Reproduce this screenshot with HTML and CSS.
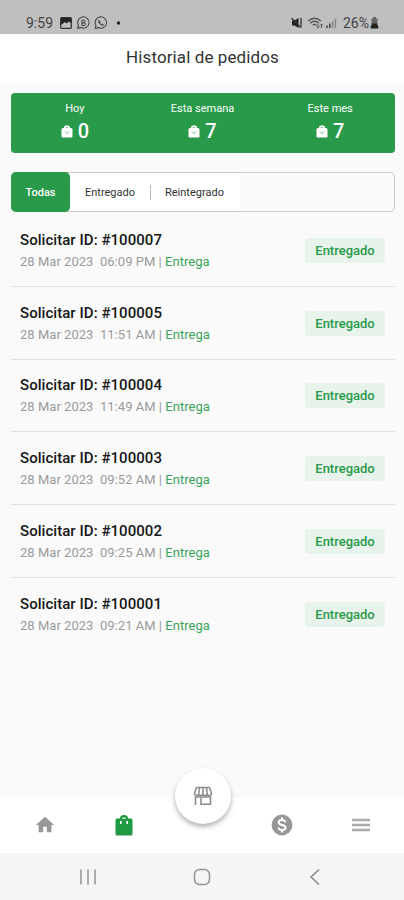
FILE: index.html
```html
<!DOCTYPE html>
<html lang="es">
<head>
    <meta charset="UTF-8">
    <meta name="viewport" content="width=device-width, initial-scale=1.0">
    <title>Historial de pedidos</title>
    <link rel="stylesheet" href="styles.css">
</head>
<body>
    <svg class="sprite">
        <symbol id="bag" viewBox="0 0 12 13">
            <path d="M3 3V2.500A2 2 0 0 1 5 .5h2a2 2 0 0 1 2 2V3h1a1.500 1.500 0 0 1 1.500 1.500V11.500a1 1 0 0 1-1 1h-9a1 1 0 0 1-1-1V4.500A1.500 1.500 0 0 1 2 3zM4.500 3h3v-.6h-3z" fill="#fff"/>
            <path d="M3.800 7h.9M7.300 7h.9M5 8.200h2" stroke="#6fbc86" stroke-width="1"/>
        </symbol>
    </svg>
    <div class="status-bar">
        <span class="time">9:59</span>
        <svg class="status-left" width="66" height="16" viewBox="0 0 66 16">
            <rect x="1.700" y="2.700" width="10.600" height="10.600" rx="1" fill="none" stroke="#333" stroke-width="1.300"/>
            <path d="M2 3h10v5L10 6.500 7.500 8.500 6 7l-4 3z" fill="#222"/>
            <path d="M18.700 13.300l.8-2.800a5.700 5.700 0 1 1 2.300 2.100z" fill="none" stroke="#444" stroke-width="1.100"/>
            <path d="M23 5h1.600a1.400 1.400 0 0 1 0 2.800H23zM23 7.800h2a1.400 1.400 0 0 1 0 2.800h-2z" fill="none" stroke="#444" stroke-width="1"/>
            <path d="M36.200 13.300l.8-2.800a5.700 5.700 0 1 1 2.300 2.100z" fill="none" stroke="#444" stroke-width="1.100"/>
            <path d="M39.800 5.200c-1 1 .2 2.900 1.300 3.900s2.800 1.800 3.600.8l-1.500-1.100-.8.600c-.7-.3-1.300-.9-1.600-1.600l.5-.8z" fill="#444" stroke="#444" stroke-width=".6"/>
            <circle cx="59.500" cy="8" r="1.700" fill="#222"/>
        </svg>
        <svg class="status-right" width="50" height="16" viewBox="0 0 50 16">
            <path d="M1 5.500h2.500L7.500 3v10l-4-2.500H1z" fill="#222"/>
            <path d="M.5 3l9 9.500M10 3v9.500" stroke="#333" stroke-width="1.300"/>
            <path d="M17 6q6.500-5.500 13 0M19 8.300q4.500-4 9 0M21.500 10.400q2-2 4 0" fill="none" stroke="#555" stroke-width="1.300"/>
            <path d="M27 9v4M25.500 11.500l1.500 1.500 1.500-1.500M30.500 13V9M29 10.500L30.500 9l1.500 1.500" fill="none" stroke="#555" stroke-width=".9"/>
            <path d="M36 13v-2.500M38.800 13V8.500" stroke="#444" stroke-width="1.500"/>
            <path d="M41.600 13V6M44.400 13V3.500" stroke="#888" stroke-width="1.500"/>
        </svg>
        <span class="battery">26%</span>
        <svg width="9" height="16" viewBox="0 0 9 16">
            <path d="M3 2h3v1.500h1.500V9h-6V3.500H3z" fill="#666"/>
            <path d="M.7 11.500L2 8.500h5l1.300 3v2H.7z" fill="#222"/>
        </svg>
    </div>
    <header class="header">
        <h1>Historial de pedidos</h1>
    </header>
    <main class="content">
        <section class="summary">
            <div class="summary-item">
                <span class="summary-label">Hoy</span>
                <div class="summary-value"><svg width="12" height="13"><use href="#bag"/></svg>0</div>
            </div>
            <div class="summary-item">
                <span class="summary-label">Esta semana</span>
                <div class="summary-value"><svg width="12" height="13"><use href="#bag"/></svg>7</div>
            </div>
            <div class="summary-item">
                <span class="summary-label">Este mes</span>
                <div class="summary-value"><svg width="12" height="13"><use href="#bag"/></svg>7</div>
            </div>
        </section>
        <div class="tabs">
            <button class="tab active">Todas</button>
            <button class="tab tab-delivered">Entregado</button>
            <button class="tab tab-refunded">Reintegrado</button>
        </div>
        <div class="orders">
            <div class="order">
                <div class="order-info">
                    <h2>Solicitar ID: #100007</h2>
                    <p>28 Mar 2023&nbsp; 06:09 PM | <span class="type">Entrega</span></p>
                </div>
                <span class="badge">Entregado</span>
            </div>
            <div class="order">
                <div class="order-info">
                    <h2>Solicitar ID: #100005</h2>
                    <p>28 Mar 2023&nbsp; 11:51 AM | <span class="type">Entrega</span></p>
                </div>
                <span class="badge">Entregado</span>
            </div>
            <div class="order">
                <div class="order-info">
                    <h2>Solicitar ID: #100004</h2>
                    <p>28 Mar 2023&nbsp; 11:49 AM | <span class="type">Entrega</span></p>
                </div>
                <span class="badge">Entregado</span>
            </div>
            <div class="order">
                <div class="order-info">
                    <h2>Solicitar ID: #100003</h2>
                    <p>28 Mar 2023&nbsp; 09:52 AM | <span class="type">Entrega</span></p>
                </div>
                <span class="badge">Entregado</span>
            </div>
            <div class="order">
                <div class="order-info">
                    <h2>Solicitar ID: #100002</h2>
                    <p>28 Mar 2023&nbsp; 09:25 AM | <span class="type">Entrega</span></p>
                </div>
                <span class="badge">Entregado</span>
            </div>
            <div class="order">
                <div class="order-info">
                    <h2>Solicitar ID: #100001</h2>
                    <p>28 Mar 2023&nbsp; 09:21 AM | <span class="type">Entrega</span></p>
                </div>
                <span class="badge">Entregado</span>
            </div>
        </div>
    </main>
    <nav class="bottom-nav">
        <a class="nav-item">
            <svg width="22" height="22" viewBox="0 0 24 24" fill="#979797"><path d="M10 20v-6h4v6h5v-8h3L12 3 2 12h3v8z"/></svg>
        </a>
        <a class="nav-item">
            <svg width="18" height="22" viewBox="0 0 18 22">
                <path d="M2 4.500h2.700a4.400 4.400 0 0 1 8.600 0H16A1.500 1.500 0 0 1 17.500 6v14a1.500 1.500 0 0 1-1.500 1.500H2A1.500 1.500 0 0 1 .5 20V6A1.500 1.500 0 0 1 2 4.500z" fill="#1f9a42"/>
                <path d="M6.900 4.700a2.200 2.200 0 0 1 4.200 0z" fill="#fff"/>
                <path d="M5.800 7.500v1.700M12.200 7.500v1.700" fill="none" stroke="#fff" stroke-width="1.700" stroke-linecap="round"/>
            </svg>
        </a>
        <a class="nav-item"></a>
        <a class="nav-item">
            <svg width="22" height="22" viewBox="0 0 22 22">
                <circle cx="11" cy="11" r="10.400" fill="#979797"/>
                <path d="M14.300 8.200C14 6.700 12.800 6 11 6S7.700 6.900 7.700 8.400c0 3.400 6.800 1.700 6.800 5.100 0 1.600-1.600 2.500-3.500 2.500s-3.300-.9-3.600-2.400M11 3.500V6m0 10v2.500" fill="none" stroke="#fff" stroke-width="2"/>
            </svg>
        </a>
        <a class="nav-item">
            <svg width="20" height="16" viewBox="0 0 20 16"><path d="M1 3h18M1 8h18M1 13h18" stroke="#ababab" stroke-width="2.500"/></svg>
        </a>
        <a class="store-button">
            <svg width="20" height="20" viewBox="0 0 20 20" fill="none" stroke="#8e8e8e" stroke-width="1.600">
                <path d="M3.500 1.500h13L18.500 7.500q0 2-2.100 2t-2.100-2q0 2-2.100 2T10 7.500q0 2-2.100 2t-2.200-2q0 2-2.100 2t-2.100-2zM6.500 2l-.8 6M10 2v6M13.500 2l.8 6M2.500 19v-8h15v8M8 19v-7M8 18.300h9.500"/>
            </svg>
        </a>
    </nav>
    <div class="system-nav">
        <svg width="18" height="18" viewBox="0 0 18 18"><path d="M2 1.500v15M9 1.500v15M16 1.500v15" stroke="#929292" stroke-width="1.500"/></svg>
        <svg width="18" height="18" viewBox="0 0 18 18"><rect x="1.500" y="1.500" width="15" height="15" rx="5" fill="none" stroke="#929292" stroke-width="1.500"/></svg>
        <svg width="18" height="18" viewBox="0 0 18 18"><path d="M13 1.500L5 9l8 7.500" fill="none" stroke="#858585" stroke-width="1.400"/></svg>
    </div>
</body>
</html>
```
FILE: styles.css
```css
* {
    box-sizing: border-box;
}
body {
    display: flex;
    flex-direction: column;
    height: 900px;
    margin: 0;
    background-color: #fafafa;
    font-family: Roboto, "Liberation Sans", sans-serif;
    overflow: hidden;
}
h1, h2, p {
    margin: 0;
    font-weight: 400;
}
svg {
    display: block;
    flex: none;
}
.sprite {
    position: absolute;
    width: 0;
    height: 0;
}
.status-bar {
    display: flex;
    align-items: center;
    height: 34px;
    padding: 12px 25px 0 26px;
    background-color: #bfbfbf;
    color: #444;
    font-size: 14px;
}
.time {
    width: 28px;
}
.status-left {
    margin-left: 5px;
}
.status-right {
    margin-left: auto;
}
.battery {
    width: 27px;
    margin-left: 2px;
}
.header {
    height: 50px;
    background-color: #fff;
    text-align: center;
}
.header h1 {
    color: #333;
    font-size: 17px;
    letter-spacing: 0.1px;
    line-height: 47px;
    text-indent: 1px;
}
.content {
    flex: 1;
    padding: 9px 9px 0 11px;
}
.summary {
    display: flex;
    height: 60px;
    padding: 9px 1px 0 0;
    border-radius: 4px;
    background-color: #289a49;
    color: #fff;
    text-align: center;
}
.summary-item {
    flex: 1;
}
.summary-label {
    display: block;
    font-size: 11px;
    line-height: 14px;
}
.summary-value {
    display: flex;
    align-items: center;
    justify-content: center;
    gap: 5px;
    font-size: 20px;
    font-weight: 500;
    line-height: 30px;
}
.tabs {
    display: flex;
    height: 40px;
    margin-top: 19px;
    border: 1px solid #c8cac9;
    border-radius: 5px;
}
.tab {
    height: 38px;
    padding: 0;
    border: none;
    background-color: #fff;
    color: #333;
    font-family: inherit;
    font-size: 11px;
}
.tab.active {
    width: 59px;
    height: 40px;
    margin: -1px 0 -1px -1px;
    border-radius: 5px;
    background-color: #289a49;
    color: #fff;
    font-weight: 500;
}
.tab-delivered {
    width: 80px;
}
.tab-refunded {
    display: flex;
    align-items: center;
    width: 90px;
}
.tab-refunded::before {
    content: "";
    width: 1px;
    height: 15px;
    margin-right: 14px;
    background-color: #bbb;
}
.orders {
    padding-top: 2px;
}
.order {
    display: flex;
    align-items: center;
    justify-content: space-between;
    height: 72.8px;
    padding: 1px 10px 0 9px;
    border-bottom: 1px solid #e0e0e0;
}
.order:last-child {
    border-bottom-color: transparent;
}
.order h2 {
    color: #161616;
    font-size: 15px;
    font-weight: 500;
    letter-spacing: 0.05px;
    line-height: 22px;
}
.order p {
    color: #9b9b9b;
    font-size: 13px;
    letter-spacing: 0.03px;
    line-height: 21px;
}
.order .type {
    color: #3ba35b;
}
.badge {
    width: 80px;
    height: 25px;
    border-radius: 4px;
    background-color: #e8f3eb;
    color: #289a49;
    font-size: 13px;
    font-weight: 500;
    line-height: 25px;
    text-align: center;
}
.bottom-nav {
    position: relative;
    display: flex;
    height: 56px;
    padding: 0 4px 0 5px;
    background-color: #fff;
}
.nav-item {
    display: flex;
    flex: 1;
    align-items: center;
    justify-content: center;
}
.store-button {
    position: absolute;
    top: -29px;
    left: 175px;
    display: flex;
    align-items: center;
    justify-content: center;
    width: 56px;
    height: 56px;
    border-radius: 50%;
    background-color: #fff;
    box-shadow: 0 3px 5px rgba(0, 0, 0, 0.3);
}
.system-nav {
    display: flex;
    align-items: center;
    justify-content: space-between;
    height: 47px;
    padding: 0 80px 0 79px;
    background-color: #f5f5f5;
}
```
